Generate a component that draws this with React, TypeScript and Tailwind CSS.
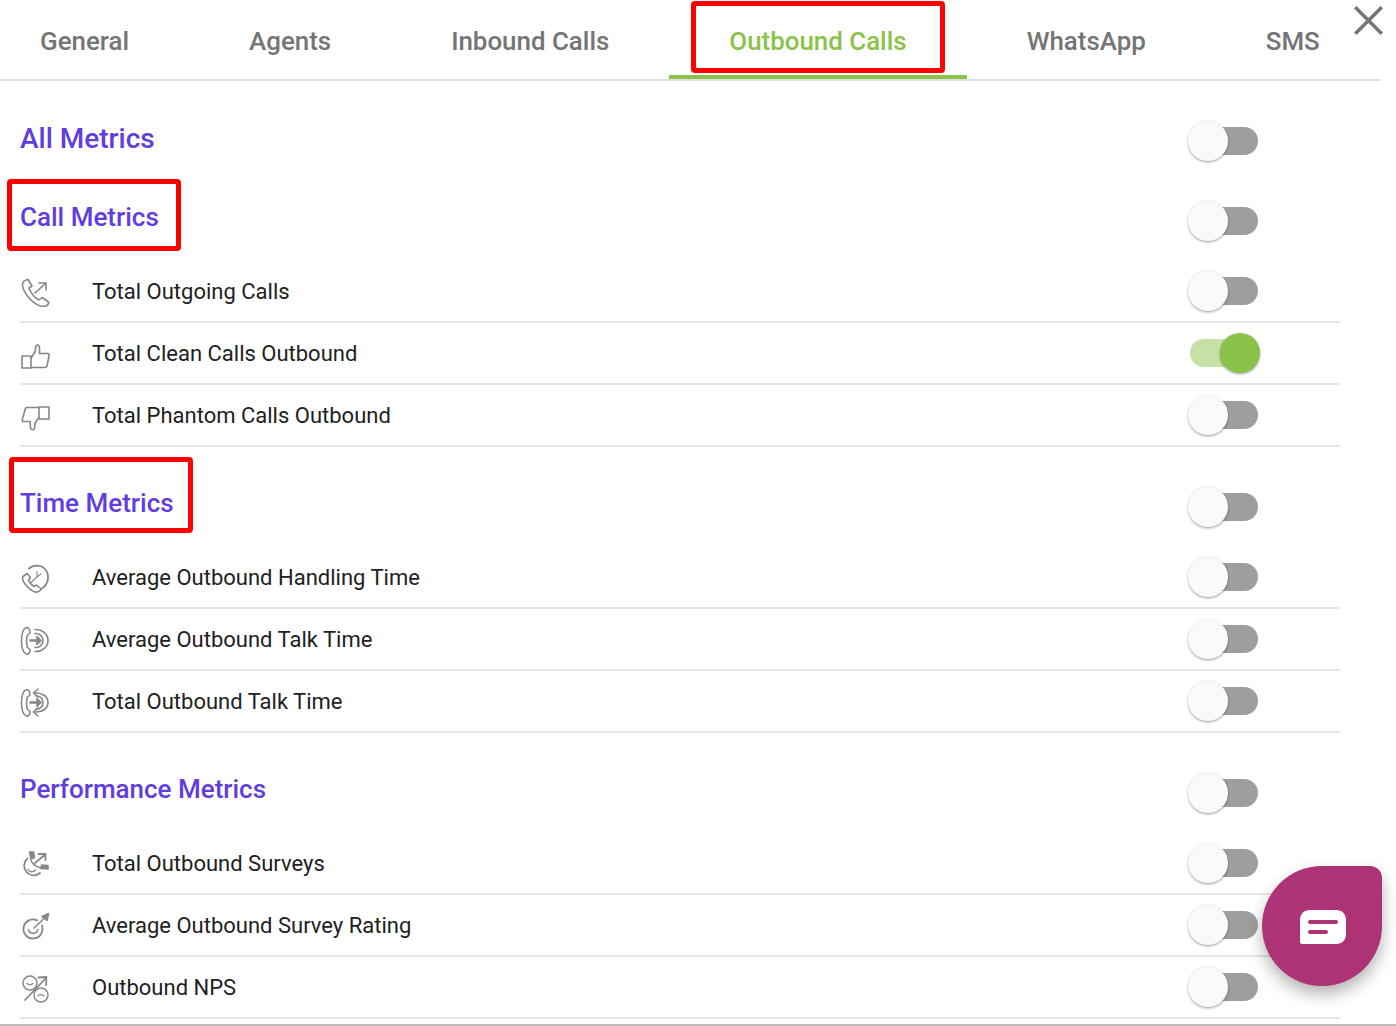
import React from "react";

const tabs = [
  { label: "General", cls: "pl-10 pr-[60px]" },
  { label: "Agents", cls: "px-[60px]" },
  { label: "Inbound Calls", cls: "px-[60px]" },
  { label: "Outbound Calls", cls: "px-[60px]", active: true },
  { label: "WhatsApp", cls: "px-[60px]" },
  { label: "SMS", cls: "px-[60px]" },
];

function Icon({ children }: { children: React.ReactNode }) {
  return (
    <svg width="32" height="32" viewBox="0 0 32 32" fill="none" stroke="#878787" strokeWidth="1.6" strokeLinejoin="round" strokeLinecap="round">
      {children}
    </svg>
  );
}

const handset = "M6.5 4.5C3.5 5.5 1.5 11 1.5 18C1.5 25 3.5 30 6.5 31C9 31.5 10 29.5 10 26.5L7.5 24.5C6.5 21 6.5 15 7.5 12L10 10C10 7 9 4.5 6.5 4.5Z";

const icons: Record<string, React.ReactNode> = {
  outgoing: (
    <>
      <path d="M8 4.5C5 5 2.5 7 2.5 10C3 17 13 31 24 31.5C27 31 29 29 28.5 27L22 22.5L19 25C15 23 11 18 9 13L12 11Z" />
      <path d="M15 18L26 8M19 8H26V15" />
    </>
  ),
  up: (
    <>
      <rect x="2" y="19" width="9" height="12" />
      <path d="M11 21L15 15L16 9C17 7 19 8 19.5 10L19.5 16.5L28 16.5C29 16.5 29.5 17.5 29 19L27 29C26.8 30 26 30.5 25 30.5L11 30.5" />
    </>
  ),
  down: (
    <>
      <rect x="19" y="8" width="10" height="12" />
      <path d="M19 8.5L7 8.5C6 8.5 5.4 9 5.2 10L2.2 21C2 22 2.6 22.5 3.5 22.5L10 22.5L10.5 29C11 31 13.5 31.5 14.5 29.5L15 24L19 18.5" />
    </>
  ),
  clock: (
    <>
      <path d="M9 7.5C13 3.5 21 3.5 25 8C30 14 28.5 23 22.5 27" strokeWidth="1.8" />
      <path d="M7 12.5L3 15.5C2 17 2.5 19 4 21.5C7 26 11 29.5 15 31C17.5 31.5 20 30 21.5 28L16.5 24L14 25.5C12 24.5 9.5 21.5 8.5 19L10.5 16.5Z" />
      <path d="M17 16V10.5M17 16L21 13M17 16L11 21.5" strokeWidth="1.1" />
    </>
  ),
  talk: (
    <>
      <path d={handset} />
      <path d="M9.5 17.5H18" strokeWidth="2.6" strokeLinecap="butt" />
      <path d="M17 13.5L21 17.5L17 21.5Z" fill="#878787" />
      <path d="M15 10.5C19 10 23 13 23 17.5C23 22 19 25 15 24.5" />
      <path d="M15 6.5C22 6 28 11 28 17.5C28 24 22 29 15 28.5" />
    </>
  ),
  talk2: (
    <>
      <path d={handset} />
      <path d="M9.5 17.5H18" strokeWidth="2.6" strokeLinecap="butt" />
      <path d="M17 13.5L21 17.5L17 21.5Z" fill="#878787" />
      <path d="M16 11C20 10.5 23 13.5 23 17.5C23 21.5 20 24.5 16 24" />
      <path d="M15 8C23 7.5 28 12 28 17.5C28 23 23 27.5 15 27" />
      <path d="M18 4L13.5 8L18 12M18 23L13.5 27L18 31" />
    </>
  ),
  survey: (
    <>
      <path d="M7.5 11.5A9.5 9.5 0 1 0 20 26" strokeWidth="1.8" />
      <path d="M8 22.5C9.5 25.5 13.5 25.5 15.5 23" strokeWidth="1.4" />
      <path d="M9.5 5H13.5L14.5 10.5L11 12Z" fill="#878787" />
      <path d="M21.5 18L28 18.5V22L21 21.5Z" fill="#878787" />
      <path d="M10.5 11.5C11 15.5 15 20 21.5 21" strokeWidth="1.4" />
      <path d="M15 16L24.5 8M18.5 7H25.5V13" strokeWidth="1.8" />
    </>
  ),
  rating: (
    <>
      <path d="M17 11.4A9.5 9.5 0 1 0 21.8 16.5" strokeWidth="1.8" />
      <path d="M8.5 20.5C9.5 25.5 16.5 25.5 17.8 20.5" strokeWidth="1.5" />
      <path d="M14 19L24.5 9" strokeWidth="1.6" />
      <path d="M22 7.5L28.5 4.5L27 11.5Z" fill="#878787" />
    </>
  ),
  nps: (
    <>
      <circle cx="10" cy="12" r="7" strokeWidth="1.5" />
      <circle cx="21" cy="24" r="7" strokeWidth="1.5" />
      <path d="M7 12.5C8.5 14 11 14 13 12.5M18 25C19.5 23.5 22 23.5 24 25" strokeWidth="1.2" />
      <path d="M5 29L26 7" strokeWidth="1.8" />
      <path d="M18.5 6.5L26.5 6L26 14" strokeWidth="1.8" />
    </>
  ),
};

function Toggle({ on = false }: { on?: boolean }) {
  return (
    <div className={`relative h-[28px] w-[68px] shrink-0 rounded-full ${on ? "bg-[#c5e1a5]" : "bg-[#9e9e9e]"}`}>
      <div
        className={`absolute top-[-6px] h-[40px] w-[40px] rounded-full shadow-[0_2px_3px_-1px_rgba(0,0,0,0.25),0_1px_3px_0_rgba(0,0,0,0.16),0_0_2px_0_rgba(0,0,0,0.1)] ${
          on ? "left-[30px] bg-[#8bc34a]" : "left-[-2px] bg-[#fafafa]"
        }`}
      />
    </div>
  );
}

function Header({ title, first = false }: { title: string; first?: boolean }) {
  return (
    <div className={`flex items-center justify-between pr-[82px] ${first ? "h-[80px] pt-[40px]" : "h-[100px] pt-[20px]"}`}>
      <h2 className={`font-medium text-[#5f3de0] ${first ? "-mt-[4px] text-[28px] leading-[36px]" : "-mt-[8px] text-[26px] leading-[34px]"}`}>{title}</h2>
      <Toggle />
    </div>
  );
}

function Row({ icon, label, on = false }: { icon: string; label: string; on?: boolean }) {
  return (
    <div className="flex h-[62px] items-center border-b-2 border-[#e6e6e6] pr-[82px]">
      <div className="flex w-[72px] items-center">
        <Icon>{icons[icon]}</Icon>
      </div>
      <span className="mt-[2px] flex-1 text-[22px] leading-[30px] text-[#212121]">{label}</span>
      <Toggle on={on} />
    </div>
  );
}

export default function App() {
  return (
    <div className="relative h-[1026px] w-[1396px] overflow-hidden bg-white font-['Roboto',sans-serif]">
      <nav className="flex h-[81px] w-[1380px] border-b-2 border-[#e0e0e0]">
        {tabs.map((t) => (
          <div
            key={t.label}
            className={`flex h-[79px] shrink-0 items-center whitespace-nowrap border-b-4 pt-[7px] text-[25.9px] font-medium ${t.cls} ${
              t.active ? "border-[#8bc34a] text-[#8bc34a]" : "border-transparent text-[#757575]"
            }`}
          >
            {t.label}
          </div>
        ))}
      </nav>

      <main className="w-[1340px] pl-5">
        <Header title="All Metrics" first />
        <Header title="Call Metrics" />
        <Row icon="outgoing" label="Total Outgoing Calls" />
        <Row icon="up" label="Total Clean Calls Outbound" on />
        <Row icon="down" label="Total Phantom Calls Outbound" />
        <Header title="Time Metrics" />
        <Row icon="clock" label="Average Outbound Handling Time" />
        <Row icon="talk" label="Average Outbound Talk Time" />
        <Row icon="talk2" label="Total Outbound Talk Time" />
        <Header title="Performance Metrics" />
        <Row icon="survey" label="Total Outbound Surveys" />
        <Row icon="rating" label="Average Outbound Survey Rating" />
        <Row icon="nps" label="Outbound NPS" />
      </main>
      <div className="mt-[5px] h-[2px] w-full bg-[#bdbdbd]" />

      {/* close */}
      <svg className="absolute left-[1354px] top-[6px]" width="29" height="29" viewBox="0 0 29 29" stroke="#757575" strokeWidth="3.6" strokeLinecap="square">
        <path d="M2.5 2.5L26.5 26.5M26.5 2.5L2.5 26.5" />
      </svg>

      {/* annotations */}
      <div className="absolute left-[691px] top-[1px] h-[72px] w-[254px] rounded-[4px] border-[5px] border-[#ff0000]" />
      <div className="absolute left-[7px] top-[179px] h-[72px] w-[174px] rounded-[4px] border-[5px] border-[#ff0000]" />
      <div className="absolute left-[9px] top-[457px] h-[76px] w-[184px] rounded-[4px] border-[5px] border-[#ff0000]" />

      {/* chat */}
      <div className="absolute left-[1262px] top-[866px] flex h-[120px] w-[120px] items-center justify-center rounded-[60px_12px_60px_60px] bg-[#ae3276] pl-[2px] pt-[2px] shadow-[0_8px_16px_rgba(0,0,0,0.3)]">
        <svg width="46" height="34" viewBox="0 0 46 34">
          <path d="M10 0H36C42 0 46 4 46 10V24C46 30 42 34 36 34H2C1 34 0 33 0 32V10C0 4 4 0 10 0Z" fill="#ffffff" />
          <rect x="8" y="10" width="30" height="4" rx="2" fill="#ae3276" />
          <rect x="8" y="20" width="20" height="4" rx="2" fill="#ae3276" />
        </svg>
      </div>
    </div>
  );
}
